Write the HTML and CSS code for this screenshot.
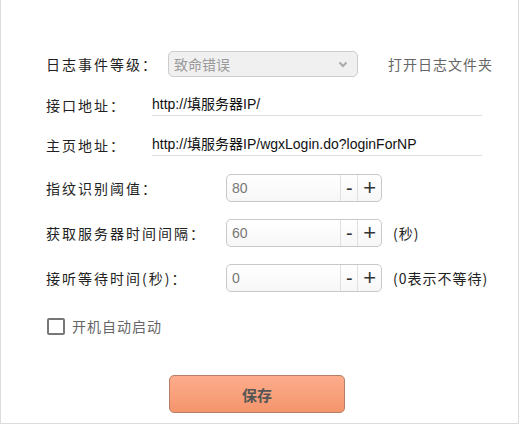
FILE: index.html
```html
<!DOCTYPE html>
<html lang="zh-CN">
<head>
  <meta charset="UTF-8" />
  <title>设置</title>
  <link rel="stylesheet" href="styles.css">
</head>
<body>
  <div class="panel">
    <div class="row row-level">
      <label class="label label-level">日志事件等级：</label>
      <div class="select">
        <span>致命错误</span>
        <svg class="chevron" width="10" height="7" viewBox="0 0 10 7"><path d="M1.5 1.5 L5 5 L8.5 1.5" fill="none" stroke="#aaa" stroke-width="2"/></svg>
      </div>
      <a class="open-log">打开日志文件夹</a>
    </div>

    <div class="row row-url">
      <label class="label label-url">接口地址：</label>
      <input class="url" type="text" value="http://填服务器IP/" />
    </div>

    <div class="row row-url">
      <label class="label label-url">主页地址：</label>
      <input class="url" type="text" value="http://填服务器IP/wgxLogin.do?loginForNP" />
    </div>

    <div class="row row-spin first-spin">
      <label class="label label-spin">指纹识别阈值：</label>
      <div class="spinner">
        <input type="text" value="80" />
        <button class="minus">-</button>
        <button class="plus">+</button>
      </div>
    </div>

    <div class="row row-spin">
      <label class="label label-spin">获取服务器时间间隔：</label>
      <div class="spinner">
        <input type="text" value="60" />
        <button class="minus">-</button>
        <button class="plus">+</button>
      </div>
      <span class="suffix">(秒)</span>
    </div>

    <div class="row row-spin">
      <label class="label label-spin">接听等待时间(秒)：</label>
      <div class="spinner">
        <input type="text" value="0" />
        <button class="minus">-</button>
        <button class="plus">+</button>
      </div>
      <span class="suffix">(0表示不等待)</span>
    </div>

    <div class="row row-check">
      <span class="checkbox"></span>
      <span class="check-label">开机自动启动</span>
    </div>

    <div class="actions">
      <button class="save">保存</button>
    </div>
  </div>
</body>
</html>
```

FILE: styles.css
```css
body {
  margin: 0;
  background: #fff;
  font-family: "Noto Sans CJK SC", sans-serif;
  font-size: 14px;
  color: #222;
}

.panel {
  width: 519px;
  height: 424px;
  box-sizing: border-box;
  border: 1px solid #dcdcdc;
  border-top: none;
  padding: 51px 0 0 45px;
}

.row {
  display: flex;
  align-items: center;
}

.label {
  letter-spacing: 2px;
  white-space: nowrap;
}

.label-level { width: 122px; }
.label-url { width: 106px; padding-top: 4px; }
.label-spin { width: 180px; }

.row-level {
  height: 26px;
}

.select {
  width: 190px;
  height: 26px;
  box-sizing: border-box;
  border: 1px solid #cdcdcd;
  border-radius: 5px;
  background: #f0f0f0;
  display: flex;
  align-items: center;
  justify-content: space-between;
  padding: 0 9px 0 5px;
  color: #999;
}

.open-log {
  margin-left: 30px;
  color: #666;
  letter-spacing: 1px;
}

.row-url {
  height: 26px;
  margin-top: 13px;
}

.row-url + .row-url {
  margin-top: 14px;
}

.url {
  width: 330px;
  height: 26px;
  box-sizing: border-box;
  border: none;
  border-bottom: 1px solid #ddd;
  padding: 0;
  font-family: "Liberation Sans", "Noto Sans CJK SC", sans-serif;
  font-size: 14px;
  color: #111;
  outline: none;
}

.row-spin {
  height: 28px;
  margin-top: 17px;
}

.first-spin {
  margin-top: 18px;
}

.spinner {
  width: 156px;
  height: 28px;
  box-sizing: border-box;
  border: 1px solid #c8c8c8;
  border-radius: 5px;
  display: flex;
  overflow: hidden;
  background: linear-gradient(#fff, #f7f7f7);
}

.spinner input {
  width: 108px;
  border: none;
  background: transparent;
  padding: 0 0 0 5px;
  font-family: "Liberation Sans", sans-serif;
  font-size: 14px;
  color: #777;
  outline: none;
}

.spinner button {
  border: none;
  border-left: 1px solid #e0e0e0;
  background: transparent;
  padding: 0;
  font-family: "Liberation Sans", sans-serif;
  color: #333;
  cursor: pointer;
}

.minus {
  width: 20px;
  font-size: 20px;
}

.plus {
  width: 27px;
  font-size: 22px;
}

.suffix {
  margin-left: 11px;
  letter-spacing: 1px;
  color: #222;
}

.row-check {
  height: 18px;
  margin-top: 25px;
}

.checkbox {
  width: 18px;
  height: 17px;
  box-sizing: border-box;
  border: 2px solid #777;
  border-radius: 2px;
  margin-left: 1px;
}

.check-label {
  margin-left: 7px;
  letter-spacing: 1px;
  color: #666;
}

.actions {
  margin-top: 40px;
  padding-left: 123px;
}

.save {
  width: 176px;
  height: 38px;
  border: 1px solid #b77f66;
  border-radius: 5px;
  background: linear-gradient(#fdac8c, #f4956c);
  font-family: "Noto Sans CJK SC", sans-serif;
  font-size: 15px;
  font-weight: bold;
  color: #555;
  cursor: pointer;
}
```
